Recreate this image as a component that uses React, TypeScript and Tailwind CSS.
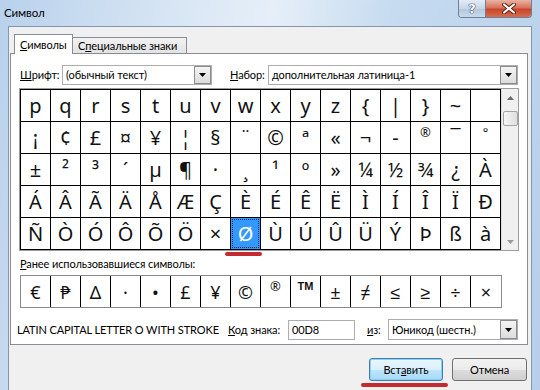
import React from "react";

const rows: string[][] = [
  ["p","q","r","s","t","u","v","w","x","y","z","{","|","}","~",""],
  ["¡","¢","£","¤","¥","¦","§","¨","©","ª","«","¬","-","®","¯","°"],
  ["±","²","³","´","µ","¶","·","¸","¹","º","»","¼","½","¾","¿","À"],
  ["Á","Â","Ã","Ä","Å","Æ","Ç","È","É","Ê","Ë","Ì","Í","Î","Ï","Ð"],
  ["Ñ","Ò","Ó","Ô","Õ","Ö","×","Ø","Ù","Ú","Û","Ü","Ý","Þ","ß","à"],
];

const recent = ["€","₱","Δ","·","•","£","¥","©","®","™","±","≠","≤","≥","÷","×"];

const ui = "font-['Lato',sans-serif] text-[11px] tracking-[-0.1px] leading-[16px] text-black whitespace-nowrap";

function DropBtn() {
  return (
    <div className="w-[17px] h-full border border-[#8c8c8c] bg-[linear-gradient(#f4f4f4,#dcdcdc)] flex items-center justify-center">
      <svg width="7" height="4" viewBox="0 0 7 4">
        <path d="M0 0H7L3.5 4Z" fill="#000" />
      </svg>
    </div>
  );
}

function Combo({ cls, text }: { cls: string; text: string }) {
  return (
    <div className={`flex h-[20px] border border-[#abadb3] bg-white ${cls}`}>
      <div className="flex-1 pl-[3px] flex items-center overflow-hidden whitespace-nowrap">{text}</div>
      <DropBtn />
    </div>
  );
}

export default function App() {
  return (
    <div className={`w-[540px] h-[390px] overflow-hidden bg-[linear-gradient(100deg,#b9d1ec_0%,#d4e3f3_25%,#e6eff8_45%,#c6dbf0_65%,#b7cfea_100%)] ${ui}`}>
      {/* title bar */}
      <div className="flex h-[26px]">
        <div className="pl-[4px] pt-[5px] text-[11.5px] text-black">Символ</div>
        <div className="ml-auto mr-[8px] flex h-[18px] rounded-b-[4px] overflow-hidden border border-t-0 border-[#6f7f94]">
          <div className="w-[27px] flex items-center justify-center border-r border-[#6f7f94] bg-[linear-gradient(#e3ecf6,#c6d6e8_50%,#b2c6dd_51%,#c8d9ea)]">
            <span className="font-['DejaVu_Sans',sans-serif] font-bold text-[13px] leading-none text-white [text-shadow:0_0_1px_#2b3d55,0_0_1px_#2b3d55,0_0_1px_#2b3d55]">?</span>
          </div>
          <div className="w-[45px] flex items-center justify-center bg-[linear-gradient(#eab3a4,#d8735a_45%,#c8452a_55%,#d56e4f)]">
            <svg width="14" height="11" viewBox="0 0 14 11">
              <path d="M2 1.5L12 9.5M12 1.5L2 9.5" stroke="#5a1e12" strokeWidth="4" strokeLinecap="round" />
              <path d="M2 1.5L12 9.5M12 1.5L2 9.5" stroke="#ffffff" strokeWidth="2.2" strokeLinecap="round" />
            </svg>
          </div>
        </div>
      </div>

      {/* client area */}
      <div className="ml-[8px] w-[524px] h-[370px] border border-[#8496ae] bg-[#f0f0f0]">
        {/* tabs */}
        <div className="mt-[7px] pl-[5px] flex items-end h-[19px]">
          <div className="relative z-10 -mb-px h-[20px] w-[59px] border border-b-0 border-[#898c95] bg-white flex items-center pl-[5px]">
            <span><span className="underline">С</span>имволы</span>
          </div>
          <div className="h-[16px] w-[114px] border border-l-0 border-b-0 border-[#898c95] bg-[linear-gradient(#f2f2f2,#e3e3e3)] flex items-center pl-[5px]">
            <span>С<span className="underline">п</span>ециальные знаки</span>
          </div>
        </div>

        {/* panel */}
        <div className="ml-[1px] w-[518px] h-[292px] border border-[#898c95] bg-white flex flex-col">
          {/* font row */}
          <div className="mt-[11px] pl-[9px] flex items-center h-[20px]">
            <div className="w-[42px]"><span className="underline">Ш</span>рифт:</div>
            <Combo cls="w-[150px]" text="(обычный текст)" />
            <div className="ml-[18px] w-[38px]"><span className="underline">Н</span>абор:</div>
            <Combo cls="w-[250px]" text="дополнительная латиница-1" />
          </div>

          {/* symbol grid */}
          <div className="mt-[3px] ml-[8px] w-[500px] flex border border-[#9c9c9c]">
            <div className="grid grid-cols-[repeat(16,30px)] border-l border-t border-black">
              {rows.map((r, ri) =>
                r.map((c, ci) => {
                  const sel = ri === 4 && ci === 7;
                  const small = ri === 1 && (ci === 13 || ci === 15);
                  return (
                    <div
                      key={ri + "-" + ci}
                      className={`relative h-[32px] border-r border-b border-black flex items-center justify-center font-['Noto_Sans',sans-serif] text-[20px] leading-none tracking-normal ${sel ? "bg-[#3399ff] text-white" : "text-[#111]"}`}
                    >
                      {sel && <div className="absolute inset-[1px] border border-dotted border-[#0a2a66]" />}
                      {small ? (
                        <span className="relative text-[13px] -mt-[10px]">{c}</span>
                      ) : (
                        <span className="relative">{c}</span>
                      )}
                      {sel && <div className="absolute left-[-6px] top-[34px] w-[37px] h-[4px] rounded-full bg-[#c42a2f] z-20" />}
                    </div>
                  );
                })
              )}
            </div>
            {/* scrollbar */}
            <div className="w-[17px] bg-[#f0f0f0] flex flex-col items-center border-l border-[#e0e0e0]">
              <div className="h-[17px] w-full flex items-center justify-center">
                <svg width="7" height="4" viewBox="0 0 7 4"><path d="M0 4H7L3.5 0Z" fill="#6a6a6a" /></svg>
              </div>
              <div className="mt-[5px] h-[15px] w-[15px] rounded-[2px] border border-[#a4a4a4] bg-[linear-gradient(90deg,#f6f6f6,#dedede)]" />
              <div className="mt-auto h-[17px] w-full flex items-center justify-center">
                <svg width="7" height="4" viewBox="0 0 7 4"><path d="M0 0H7L3.5 4Z" fill="#9a9a9a" /></svg>
              </div>
            </div>
          </div>

          {/* recent label */}
          <div className="mt-[5px] pl-[9px]"><span className="underline">Р</span>анее использовавшиеся символы:</div>

          {/* recent row */}
          <div className="mt-[3px] ml-[9px] w-[482px] grid grid-cols-[repeat(16,30px)] border border-[#8a8a8a]">
            {recent.map((c, i) => (
              <div
                key={i}
                className={`h-[31px] flex items-center justify-center font-['Noto_Sans',sans-serif] text-[18px] leading-none tracking-normal text-[#111] ${i < 15 ? "border-r border-black" : ""}`}
              >
                {c === "™" ? (
                  <span className="font-['Liberation_Sans',sans-serif] text-[11px] font-bold -mt-[10px]">TM</span>
                ) : c === "®" ? (
                  <span className="text-[13px] -mt-[10px]">{c}</span>
                ) : (
                  c
                )}
              </div>
            ))}
          </div>

          {/* info row */}
          <div className="mt-[11px] pl-[6px] flex items-center h-[21px]">
            <div className="w-[211px] whitespace-nowrap">LATIN CAPITAL LETTER O WITH STROKE</div>
            <div className="w-[60px]"><span className="underline">К</span>од знака:</div>
            <div className="w-[67px] h-[20px] border border-[#abadb3] bg-white pl-[3px] flex items-center">00D8</div>
            <div className="ml-[12px] w-[21px]"><span className="underline">и</span>з:</div>
            <Combo cls="w-[130px] h-[21px]" text="Юникод (шестн.)" />
          </div>
        </div>

        {/* buttons */}
        <div className="mt-[13px] pr-[4px] flex justify-end gap-[9px]">
          <div className="relative w-[74px] h-[23px] rounded-[3px] border border-[#3c7fb1] bg-[linear-gradient(#eaf6fd,#d9f0fc_50%,#bee6fd_51%,#a7d9f5)] flex items-center justify-center shadow-[inset_0_0_0_1px_#8ed0f3]">
            <span>Вст<span className="underline">а</span>вить</span>
            <div className="absolute left-[-9px] top-[24px] w-[87px] h-[4px] rounded-full bg-[#c42a2f]" />
          </div>
          <div className="w-[75px] h-[23px] rounded-[3px] border border-[#707070] bg-[linear-gradient(#f2f2f2,#ebebeb_50%,#dddddd_51%,#cfcfcf)] flex items-center justify-center">
            Отмена
          </div>
        </div>
      </div>
    </div>
  );
}
